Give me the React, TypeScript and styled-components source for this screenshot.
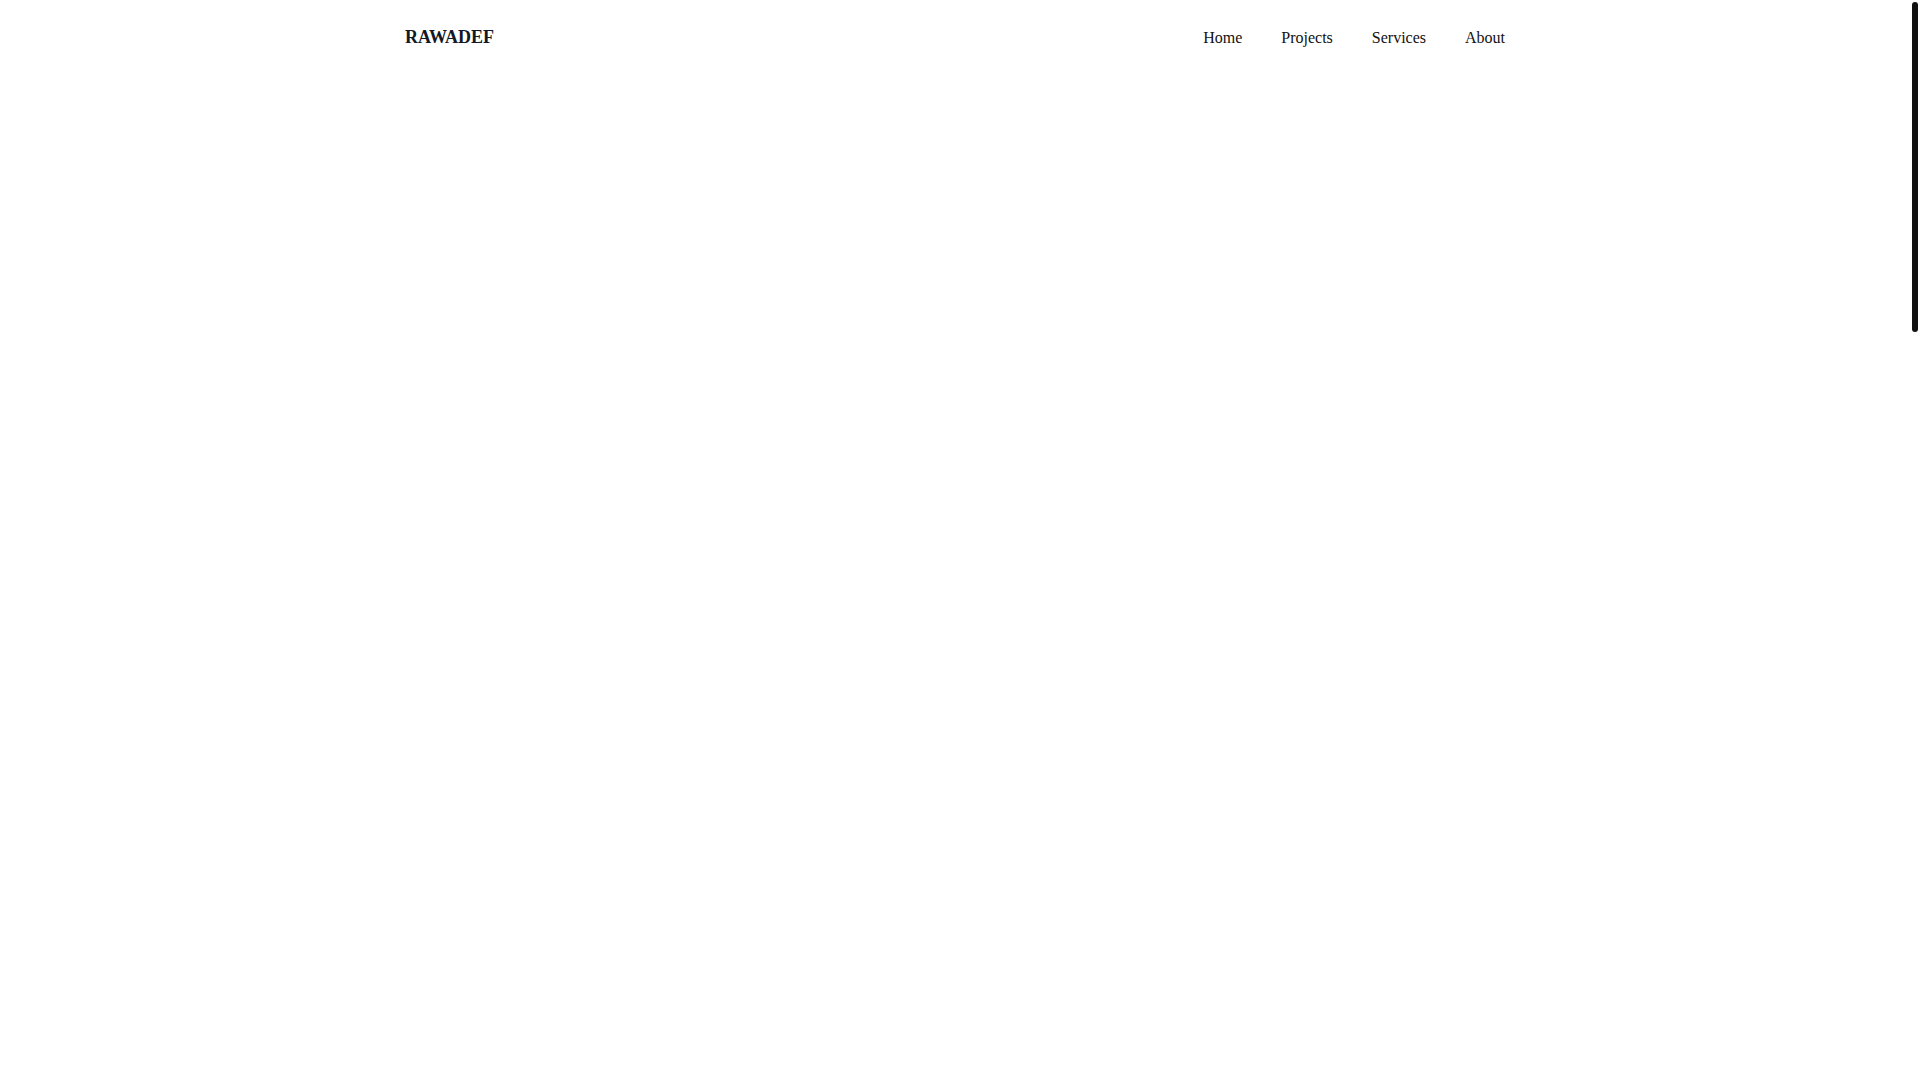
import styled, { createGlobalStyle } from 'styled-components';

const GlobalStyle = createGlobalStyle`
  * {
    box-sizing: border-box;
  }

  html {
    scrollbar-width: none;
  }

  body {
    margin: 0;
    background: #ffffff;
    font-family: "Liberation Serif", "Times New Roman", serif;
    color: #111111;
  }
`;

// leaves room on the right for the thin scrollbar
const Page = styled.div`
  padding-right: 10px;
`;

const Header = styled.header`
  width: 100%;
`;

const HeaderInner = styled.div`
  max-width: 1100px;
  margin: 0 auto;
  padding: 27px 0 24px;
  display: flex;
  align-items: baseline;
  justify-content: space-between;
`;

const Logo = styled.a`
  font-size: 18px;
  font-weight: 700;
  color: #111827;
  text-decoration: none;
`;

const Nav = styled.nav`
  display: flex;
  gap: 39px;
`;

const NavLink = styled.a`
  font-size: 16px;
  color: #111111;
  text-decoration: none;
`;

const Main = styled.main`
  min-height: 3400px;
`;

const ScrollTrack = styled.div`
  position: fixed;
  top: 0;
  right: 0;
  width: 10px;
  height: 100vh;
  padding: 2px 2px 0;
  pointer-events: none;
`;

const ScrollThumb = styled.div`
  width: 6px;
  height: 330px;
  border-radius: 3px;
  background: #111111;
`;

const links = ['Home', 'Projects', 'Services', 'About'];

const App = () => {
  return (
    <Page>
      <GlobalStyle />
      <Header>
        <HeaderInner>
          <Logo href="#">RAWADEF</Logo>
          <Nav>
            {links.map((label) => (
              <NavLink key={label} href="#">
                {label}
              </NavLink>
            ))}
          </Nav>
        </HeaderInner>
      </Header>
      <Main />
      <ScrollTrack>
        <ScrollThumb />
      </ScrollTrack>
    </Page>
  );
};

export default App;
